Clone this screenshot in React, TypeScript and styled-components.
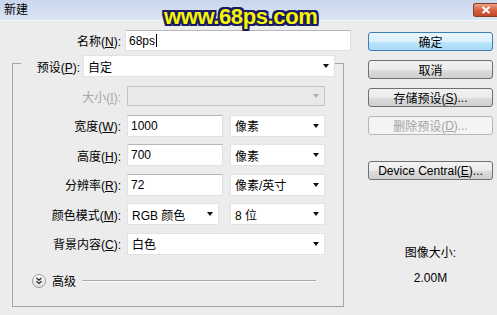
import styled, { createGlobalStyle } from "styled-components"

const GlobalStyle = createGlobalStyle`
  html, body { margin: 0; padding: 0; background: #ececec; }
  body {
    font-family: "Liberation Sans", "Noto Sans CJK SC", sans-serif;
    font-size: 12px;
    color: #000;
  }
`

const Window = styled.div`
  position: relative;
  width: 497px;
  height: 315px;
  background: #ececec;
  overflow: hidden;
  display: flex;
  flex-direction: column;
`

const TitleBar = styled.div`
  height: 20px;
  display: flex;
  align-items: center;
  padding-left: 4px;
  background: linear-gradient(#c9d7ec, #dbe5f3);
  border-bottom: 1px solid #f5f8fc;
`

const Title = styled.span`
  line-height: 20px;
`

const CloseBtn = styled.div`
  margin-left: auto;
  width: 24px;
  height: 14px;
  box-sizing: border-box;
  border: 1px solid #8a3a26;
  border-right: none;
  border-radius: 3px 0 0 3px;
  background: linear-gradient(#eaa48d, #d5613f 50%, #c4472a);
  display: flex;
  align-items: center;
  justify-content: center;
`

const Watermark = styled.div`
  position: absolute;
  left: 164px;
  top: 4px;
  font-family: "Liberation Sans", sans-serif;
  font-weight: 700;
  font-size: 22px;
  letter-spacing: -0.4px;
  color: #f6f600;
  text-shadow:
    2px 0 0 #1b1a64, -2px 0 0 #1b1a64, 0 2px 0 #1b1a64, 0 -2px 0 #1b1a64,
    2px 2px 0 #1b1a64, -2px -2px 0 #1b1a64, 2px -2px 0 #1b1a64, -2px 2px 0 #1b1a64;
`

const Body = styled.div`
  display: flex;
  padding-top: 9px;
`

const LeftCol = styled.div`
  width: 351px;
  display: flex;
  flex-direction: column;
`

const RightCol = styled.div`
  margin-left: 17px;
  width: 125px;
  padding-top: 2px;
  display: flex;
  flex-direction: column;
  gap: 9px;
`

const NameRow = styled.div`
  display: grid;
  grid-template-columns: 121px 226px;
  column-gap: 4px;
  align-items: center;
  height: 21px;
`

const Label = styled.span<{ $disabled?: boolean }>`
  text-align: right;
  white-space: nowrap;
  color: ${p => (p.$disabled ? "#a6a6a6" : "#000")};
`

const Key = styled.u`
  text-underline-offset: 1px;
`

const TextBox = styled.div<{ $w?: number }>`
  box-sizing: border-box;
  width: ${p => (p.$w ? `${p.$w}px` : "100%")};
  height: ${p => (p.$w ? "22px" : "21px")};
  background: #fff;
  border: 1px solid #dfe1e6;
  border-top-color: #b4b6bc;
  padding-left: 3px;
  display: flex;
  align-items: center;
`

const Caret = styled.span`
  display: inline-block;
  width: 1px;
  height: 13px;
  background: #000;
  margin-left: 1px;
`

const Group = styled.div`
  margin: 12px 0 0 12px;
  width: 332px;
  box-sizing: border-box;
  border: 1px solid #a4a4a4;
  padding-bottom: 17px;
`

const GroupHead = styled.div`
  margin: -9px 0 0 8px;
  width: 314px;
  height: 22px;
  background: #ececec;
  display: grid;
  grid-template-columns: 59px 252px;
  column-gap: 3px;
  align-items: center;
`

const Select = styled.div<{ $w: number; $disabled?: boolean; $h?: number }>`
  box-sizing: border-box;
  width: ${p => p.$w}px;
  height: ${p => p.$h ?? 22}px;
  background: ${p => (p.$disabled ? "#e9e9e9" : "#fff")};
  border: 1px solid ${p => (p.$disabled ? "#c4c4c4" : "#e2e2e2")};
  padding: 0 5px 0 4px;
  display: flex;
  align-items: center;
  justify-content: space-between;
  white-space: nowrap;
`

const Arrow = styled.span<{ $disabled?: boolean }>`
  width: 0;
  height: 0;
  border-left: 3.5px solid transparent;
  border-right: 3.5px solid transparent;
  border-top: 4px solid ${p => (p.$disabled ? "#b0b0b0" : "#111")};
`

const Rows = styled.div`
  margin-top: 8px;
  display: flex;
  flex-direction: column;
  gap: 7.5px;
`

const Row = styled.div`
  display: grid;
  grid-template-columns: 108px auto;
  column-gap: 6px;
  align-items: center;
  height: 22px;
`

const Fields = styled.div`
  display: flex;
  align-items: center;
  gap: 7px;
`

const Advanced = styled.div`
  margin-top: 18px;
  padding-left: 19px;
  padding-right: 27px;
  height: 16px;
  display: flex;
  align-items: center;
  gap: 6px;
`

const Rule = styled.div`
  flex: 1;
  height: 1px;
  background: #a9a9a9;
  border-bottom: 1px solid #fbfbfb;
`

const Button = styled.div<{ $primary?: boolean; $disabled?: boolean; $mt?: number }>`
  box-sizing: border-box;
  height: 19px;
  margin-top: ${p => p.$mt ?? 0}px;
  border-radius: 3px;
  border: 1px solid ${p => (p.$primary ? "#3c7fb1" : p.$disabled ? "#b5b8ba" : "#707070")};
  background: ${p =>
    p.$primary
      ? "linear-gradient(#eaf6fd, #d9f0fc 50%, #bee6fd 50%, #a7d9f5)"
      : p.$disabled
      ? "#f4f4f4"
      : "linear-gradient(#f2f2f2, #ebebeb 50%, #dddddd 50%, #cfcfcf)"};
  color: ${p => (p.$disabled ? "#a3a3a3" : "#000")};
  display: flex;
  align-items: center;
  justify-content: center;
  white-space: nowrap;
`

const Info = styled.div`
  margin-top: 57px;
  display: flex;
  flex-direction: column;
  align-items: center;
  gap: 11px;
  line-height: 14px;
`

function AdvIcon() {
  return (
    <svg width="14" height="14" viewBox="0 0 14 14">
      <defs>
        <linearGradient id="g" x1="0" y1="0" x2="0" y2="1">
          <stop offset="0" stopColor="#ffffff" />
          <stop offset="1" stopColor="#dcdcdc" />
        </linearGradient>
      </defs>
      <circle cx="7" cy="7" r="6.5" fill="url(#g)" stroke="#9a9a9a" />
      <polyline points="4.5,4 7,6.2 9.5,4" fill="none" stroke="#222" strokeWidth="1.2" />
      <polyline points="4.5,7.3 7,9.5 9.5,7.3" fill="none" stroke="#222" strokeWidth="1.2" />
    </svg>
  )
}

export default function App() {
  return (
    <>
      <GlobalStyle />
      <Window>
        <TitleBar>
          <Title>新建</Title>
          <CloseBtn>
            <svg width="10" height="8" viewBox="0 0 10 8">
              <path d="M1.5 1 L8.5 7 M8.5 1 L1.5 7" stroke="#fff" strokeWidth="2" />
            </svg>
          </CloseBtn>
        </TitleBar>
        <Body>
          <LeftCol>
            <NameRow>
              <Label>名称(<Key>N</Key>):</Label>
              <TextBox>68ps<Caret /></TextBox>
            </NameRow>
            <Group>
              <GroupHead>
                <Label>预设(<Key>P</Key>):</Label>
                <Select $w={252}>自定<Arrow /></Select>
              </GroupHead>
              <Rows>
                <Row>
                  <Label $disabled>大小(<Key>I</Key>):</Label>
                  <Select $w={198} $h={20} $disabled><span /><Arrow $disabled /></Select>
                </Row>
                <Row>
                  <Label>宽度(<Key>W</Key>):</Label>
                  <Fields>
                    <TextBox $w={96}>1000</TextBox>
                    <Select $w={95}>像素<Arrow /></Select>
                  </Fields>
                </Row>
                <Row>
                  <Label>高度(<Key>H</Key>):</Label>
                  <Fields>
                    <TextBox $w={96}>700</TextBox>
                    <Select $w={95}>像素<Arrow /></Select>
                  </Fields>
                </Row>
                <Row>
                  <Label>分辨率(<Key>R</Key>):</Label>
                  <Fields>
                    <TextBox $w={96}>72</TextBox>
                    <Select $w={95}>像素/英寸<Arrow /></Select>
                  </Fields>
                </Row>
                <Row>
                  <Label>颜色模式(<Key>M</Key>):</Label>
                  <Fields>
                    <Select $w={92}>RGB 颜色<Arrow /></Select>
                    <Select $w={95} style={{ marginLeft: 4 }}>8 位<Arrow /></Select>
                  </Fields>
                </Row>
                <Row>
                  <Label>背景内容(<Key>C</Key>):</Label>
                  <Select $w={198}>白色<Arrow /></Select>
                </Row>
              </Rows>
              <Advanced>
                <AdvIcon />
                <span>高级</span>
                <Rule />
              </Advanced>
            </Group>
          </LeftCol>
          <RightCol>
            <Button $primary>确定</Button>
            <Button>取消</Button>
            <Button>存储预设(<Key>S</Key>)...</Button>
            <Button $disabled>删除预设(<Key>D</Key>)...</Button>
            <Button $mt={17}>Device Central(<Key>E</Key>)...</Button>
            <Info>
              <span>图像大小:</span>
              <span>2.00M</span>
            </Info>
          </RightCol>
        </Body>
        <Watermark>www.68ps.com</Watermark>
      </Window>
    </>
  )
}
